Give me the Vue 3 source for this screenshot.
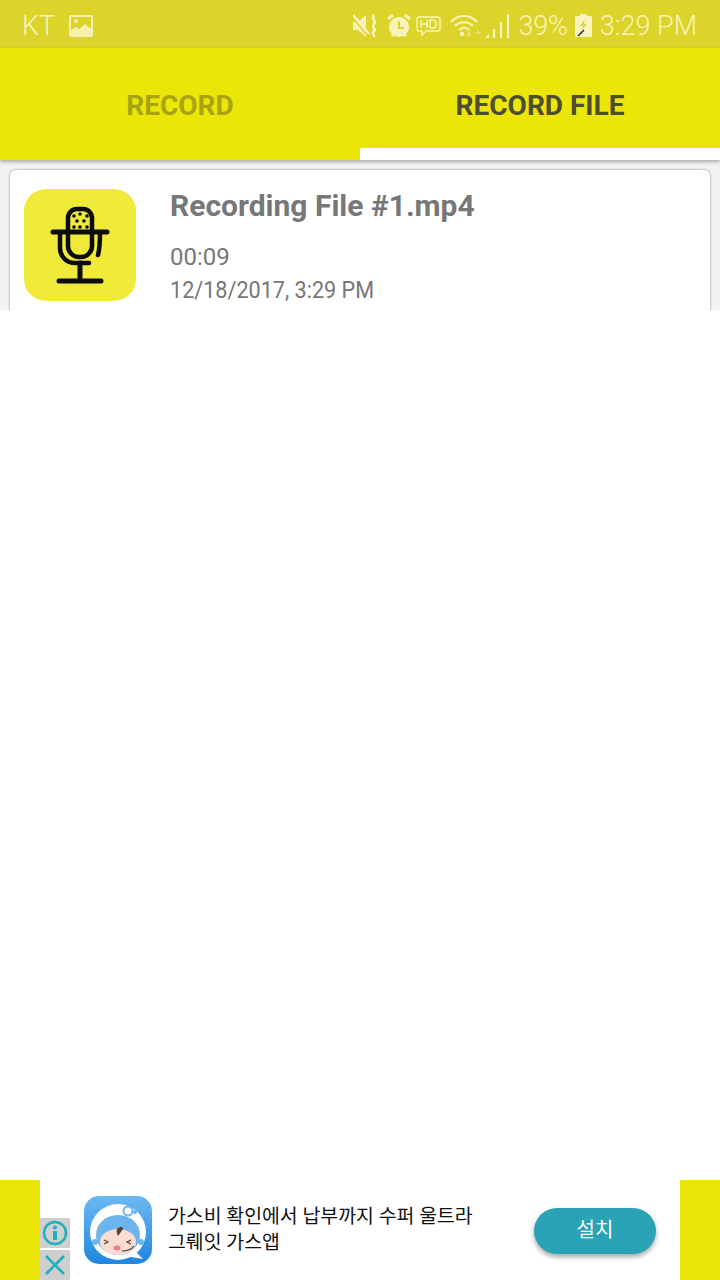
<template>
  <div class="screen">
    <div class="status-bar">
      <div class="status-left">
        <span class="carrier">KT</span>
        <svg class="ic-image" width="24" height="22" viewBox="0 0 24 22">
          <rect x="0" y="0" width="24" height="22" rx="2" fill="#f6f0b0" />
          <rect x="2" y="2" width="20" height="15" fill="#dcd42a" />
          <circle cx="7" cy="6" r="2" fill="#f6f0b0" />
          <path d="M2 18v-3l5-3 3 2 6-5 6 5v5z" fill="#f6f0b0" />
        </svg>
      </div>
      <div class="status-right">
        <svg class="ic-mute" width="25" height="24" viewBox="0 0 25 24">
          <path d="M0 8h5l8-7v22l-8-7H0z" fill="#f8f3bb" />
          <path d="M0 3l16 19" stroke="#dcd42a" stroke-width="3" />
          <path d="M0 1l16 19" stroke="#f8f3bb" stroke-width="2.500" />
          <path d="M21 1c-4 4 3 5 0 9s3 5 0 7 1 4 0 6" fill="none" stroke="#f8f3bb" stroke-width="2.600" />
        </svg>
        <svg class="ic-alarm" width="24" height="24" viewBox="0 0 24 24">
          <circle cx="12" cy="13" r="10" fill="#f8f3bb" />
          <path d="M12 7v7h5" fill="none" stroke="#dcd42a" stroke-width="2.200" />
          <path d="M1 5l5-4M23 5l-5-4M5 22l2-2M19 22l-2-2" stroke="#f8f3bb" stroke-width="3" />
        </svg>
        <svg class="ic-hd" width="25" height="20" viewBox="0 0 25 20">
          <path d="M3 1h19a2 2 0 0 1 2 2v10a2 2 0 0 1-2 2H10l-4 4v-4H3a2 2 0 0 1-2-2V3a2 2 0 0 1 2-2z" fill="none" stroke="#f8f3bb" stroke-width="1.400" />
          <path d="M5 4v8M11 4v8M5 8h6M14 4v8h2.500c5 0 5-8 0-8z" fill="none" stroke="#f8f3bb" stroke-width="1.600" />
        </svg>
        <svg class="ic-wifi" width="31" height="24" viewBox="0 0 31 24">
          <path d="M1 8c7-8 19-8 26 0M5 12c5-5 13-5 18 0M9 16c3-3 7-3 10 0" fill="none" stroke="#f8f3bb" stroke-width="2.200" />
          <circle cx="12" cy="20" r="2.200" fill="#f8f3bb" />
          <path d="M19 17v5M17 20l2 2 2-2M28 16v5M25.500 18.500h5" stroke="#e9e480" stroke-width="1.200" fill="none" />
        </svg>
        <svg class="ic-signal" width="25" height="24" viewBox="0 0 25 24">
          <path d="M0 24l4-4v4z" fill="#f8f3bb" />
          <path d="M9 24v-9M16 24V8M23 24V0" stroke="#f8f3bb" stroke-width="2.200" />
        </svg>
        <span class="status-text pct">39%</span>
        <svg class="ic-battery" width="17" height="23" viewBox="0 0 17 23">
          <path d="M5 0h7v2h4a1 1 0 0 1 1 1v19a1 1 0 0 1-1 1H1a1 1 0 0 1-1-1V3a1 1 0 0 1 1-1h4z" fill="#f8f3bb" />
          <path d="M10 5l-5 7h3l-1 4 5-6H9z" fill="#d9d24a" />
          <path d="M3 22l6-6" stroke="#333" stroke-width="1.600" />
        </svg>
        <span class="status-text clock">3:29 PM</span>
      </div>
    </div>

    <div class="tabs">
      <div class="tab">RECORD</div>
      <div class="tab active">RECORD FILE</div>
    </div>

    <div class="list">
      <div class="card">
        <div class="thumb">
          <svg width="112" height="112" viewBox="0 0 112 112">
            <path d="M44 43V29a9 9 0 0 1 9-9h6a9 9 0 0 1 9 9v14" fill="none" stroke="#0c0c0c" stroke-width="4.500" />
            <g fill="#0c0c0c">
              <circle cx="50" cy="27" r="1.800" /><circle cx="56" cy="25" r="1.800" /><circle cx="63" cy="27" r="1.800" />
              <circle cx="53" cy="32" r="1.800" /><circle cx="60" cy="32" r="1.800" />
              <circle cx="50" cy="38" r="1.800" /><circle cx="56" cy="38" r="1.800" /><circle cx="63" cy="38" r="1.800" />
            </g>
            <path d="M29 43h54" stroke="#0c0c0c" stroke-width="5" stroke-linecap="round" />
            <path d="M44 43v14a11 11 0 0 0 11 11h2a11 11 0 0 0 11-11V43" fill="none" stroke="#0c0c0c" stroke-width="4.500" />
            <path d="M36 43v16c0 9 7 15 15 15h14" fill="none" stroke="#0c0c0c" stroke-width="4.500" stroke-linecap="round" />
            <path d="M76 43c0 8 0 16-2 23" fill="none" stroke="#0c0c0c" stroke-width="4.500" stroke-linecap="round" />
            <path d="M56 74v18M35 92h42" stroke="#0c0c0c" stroke-width="5" stroke-linecap="round" />
          </svg>
        </div>
        <div class="info">
          <div class="title">Recording File #1.mp4</div>
          <div class="meta duration">00:09</div>
          <div class="meta date">12/18/2017, 3:29 PM</div>
        </div>
      </div>
    </div>

    <div class="spacer"></div>

    <div class="ad-wrap">
      <div class="ad">
        <div class="ad-badges">
          <div class="badge">
            <svg width="26" height="26" viewBox="0 0 26 26">
              <circle cx="13" cy="13" r="11" fill="none" stroke="#1fb0bf" stroke-width="2.500" />
              <circle cx="13" cy="7.500" r="2" fill="#1fb0bf" />
              <rect x="11" y="11" width="4" height="9" fill="#1fb0bf" />
            </svg>
          </div>
          <div class="badge">
            <svg width="24" height="24" viewBox="0 0 24 24">
              <path d="M3 3l18 18M21 3L3 21" stroke="#1fb0bf" stroke-width="2.600" />
            </svg>
          </div>
        </div>
        <div class="ad-icon">
          <svg width="68" height="68" viewBox="0 0 68 68">
            <defs>
              <linearGradient id="adBg" x1="0" y1="0" x2="0" y2="1">
                <stop offset="0" stop-color="#6cb9f2" />
                <stop offset="1" stop-color="#1f86e0" />
              </linearGradient>
            </defs>
            <rect width="68" height="68" rx="15" fill="url(#adBg)" />
            <circle cx="34" cy="36" r="28" fill="#fff" />
            <path d="M50 54l9 9-18-3z" fill="#fff" />
            <ellipse cx="34" cy="39" rx="22" ry="20" fill="#6cb4ec" />
            <circle cx="11" cy="46" r="3" fill="#6cb4ec" />
            <circle cx="57" cy="46" r="3" fill="#6cb4ec" />
            <circle cx="44" cy="15" r="4.500" fill="none" stroke="#6cb4ec" stroke-width="2" />
            <circle cx="51" cy="16" r="2" fill="#6cb4ec" />
            <path d="M38 21c-2 2-4 3-4 6" fill="none" stroke="#6cb4ec" stroke-width="2" />
            <ellipse cx="34" cy="46" rx="18" ry="13" fill="#fbdcd3" />
            <path d="M33 33c3-3 7-2 6 0l-5 7c-1-2-2-5-1-7z" fill="#5a4038" />
            <path d="M20 44l4 2-4 2M47 44l-4 2 4 2" fill="none" stroke="#5a4038" stroke-width="1.300" />
            <ellipse cx="33" cy="52" rx="3.500" ry="2.500" fill="#ef7f8e" />
            <path d="M50 50c-3 4-8 5-12 5" fill="none" stroke="#333" stroke-width="1.200" />
          </svg>
        </div>
        <div class="ad-text">가스비 확인에서 납부까지 수퍼 울트라<br />그뤠잇 가스앱</div>
        <div class="ad-btn">설치</div>
      </div>
    </div>
  </div>
</template>

<script setup>
</script>

<style>
html, body {
  margin: 0;
  background: #fff;
}
</style>

<style scoped>
.screen {
  width: 720px;
  height: 1280px;
  display: flex;
  flex-direction: column;
  overflow: hidden;
  background: #fff;
  font-family: Roboto, "Noto Sans CJK KR", sans-serif;
}

.status-bar {
  height: 48px;
  flex: none;
  background: #dcd42a;
  display: flex;
  align-items: center;
  justify-content: space-between;
  padding: 3px 23px 0 22px;
  box-sizing: border-box;
  color: #f8f3bb;
}

.status-left {
  display: flex;
  align-items: center;
  gap: 14px;
}

.carrier {
  font-size: 27px;
  font-weight: 300;
}

.status-right {
  display: flex;
  align-items: center;
}

.status-text {
  font-size: 27px;
  font-weight: 300;
}

.ic-alarm {
  margin-left: 9px;
}

.ic-hd {
  margin-left: 5px;
}

.ic-wifi {
  margin-left: 9px;
}

.ic-signal {
  margin-left: 4px;
}

.pct {
  margin-left: 9px;
  letter-spacing: -0.2px;
}

.ic-battery {
  margin-left: 7px;
}

.clock {
  margin-left: 8px;
}

.tabs {
  height: 112px;
  flex: none;
  display: flex;
  background: #ebe607;
  box-shadow: 0 2px 4px rgba(0, 0, 0, 0.3);
  position: relative;
}

.tab {
  flex: 1;
  display: flex;
  align-items: center;
  justify-content: center;
  font-size: 28px;
  font-weight: 700;
  color: #a8a410;
  padding-top: 2px;
  box-sizing: border-box;
}

.tab.active {
  color: #4d4d30;
  border-bottom: 12px solid #fff;
  padding-top: 14px;
}

.list {
  height: 150px;
  flex: none;
  padding: 10px 10px 0;
  box-sizing: border-box;
  overflow: hidden;
  background: #f3f3f3;
}

.card {
  height: 200px;
  background: #fff;
  border-radius: 6px;
  box-shadow: 0 0 3px rgba(0, 0, 0, 0.4);
  display: flex;
  padding: 19px 14px;
  box-sizing: border-box;
  gap: 34px;
}

.thumb {
  width: 112px;
  height: 112px;
  flex: none;
  border-radius: 22px;
  background: #f0ea3a;
  display: flex;
}

.info {
  display: flex;
  flex-direction: column;
}

.title {
  font-size: 30px;
  font-weight: 700;
  color: #777;
  line-height: 36px;
  margin-top: -1px;
  margin-bottom: 17px;
}

.meta {
  font-size: 24px;
  color: #777;
  line-height: 33px;
}

.date {
  transform: scaleX(0.9);
  transform-origin: left center;
  white-space: nowrap;
}

.spacer {
  flex: 1;
}

.ad-wrap {
  height: 100px;
  flex: none;
  background: #ebe607;
  padding: 0 40px;
  box-sizing: border-box;
}

.ad {
  height: 100%;
  background: #fff;
  position: relative;
  display: flex;
  align-items: center;
  padding-left: 44px;
  box-sizing: border-box;
}

.ad-badges {
  position: absolute;
  left: 0;
  bottom: 0;
  width: 30px;
  display: flex;
  flex-direction: column;
  gap: 2px;
}

.badge {
  height: 30px;
  background: #cfcfcf;
  display: flex;
  align-items: center;
  justify-content: center;
}

.ad-icon {
  width: 68px;
  height: 68px;
  flex: none;
  display: flex;
}

.ad-text {
  margin-left: 16px;
  font-size: 19.400px;
  line-height: 26px;
  color: #111;
  width: 350px;
  white-space: nowrap;
}

.ad-btn {
  position: absolute;
  left: 494px;
  top: 28px;
  width: 122px;
  height: 46px;
  padding-bottom: 5px;
  box-sizing: border-box;
  border-radius: 23px;
  background: #2aa3b6;
  color: #fff;
  font-size: 20px;
  display: flex;
  align-items: center;
  justify-content: center;
  box-shadow: 0 3px 5px rgba(0, 0, 0, 0.35);
}
</style>
